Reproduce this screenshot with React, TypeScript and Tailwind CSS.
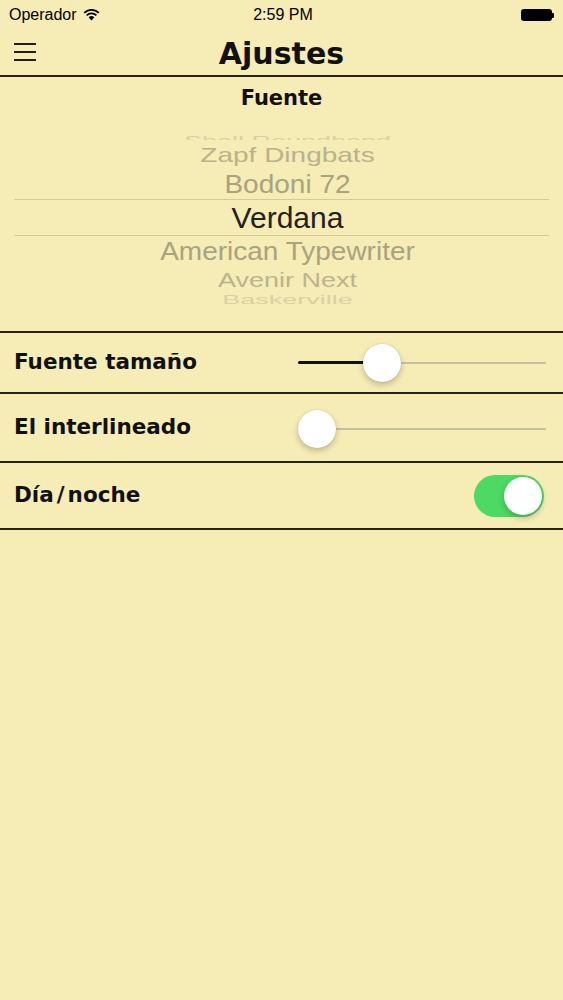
import React from 'react';

const verdana = { fontFamily: '"DejaVu Sans", Verdana, sans-serif' };

function StatusBar() {
  return (
    <div className="grid grid-cols-3 items-center h-[29px] px-[9px] pt-[1px] text-[16px] text-black font-['Liberation_Sans',sans-serif]">
      <div className="flex items-center gap-[6px]">
        <span>Operador</span>
        <svg width="17" height="12" viewBox="0 0 17 12">
          <path d="M8.5 11.5 L5.6 8.3 A4.2 4.2 0 0 1 11.4 8.3 Z" fill="black" />
          <path d="M3.6 6.3 A7 7 0 0 1 13.4 6.3" stroke="black" strokeWidth="1.8" fill="none" />
          <path d="M1.2 3.8 A10.5 10.5 0 0 1 15.8 3.8" stroke="black" strokeWidth="1.8" fill="none" />
        </svg>
      </div>
      <div className="text-center pl-[3px]">2:59 PM</div>
      <div className="flex justify-end items-center">
        <div className="w-[31px] h-[12px] rounded-[3px] bg-black" />
        <div className="w-[2px] h-[5px] rounded-r-[1px] bg-black" />
      </div>
    </div>
  );
}

function NavBar() {
  return (
    <div className="grid grid-cols-[1fr_auto_1fr] items-center h-[48px] border-b-2 border-[#26241a]">
      <div className="pl-[14px] flex flex-col gap-[6.5px] w-[36px] box-content">
        <div className="h-[1.5px] w-[22px] bg-[#1e1e1e]" />
        <div className="h-[1.5px] w-[22px] bg-[#1e1e1e]" />
        <div className="h-[1.5px] w-[22px] bg-[#1e1e1e]" />
      </div>
      <h1 className="text-[30px] font-bold text-[#111] leading-none pt-[3px]" style={verdana}>
        Ajustes
      </h1>
      <div />
    </div>
  );
}

const pickerFont = "font-['Liberation_Sans',Arial,sans-serif]";

function Picker() {
  return (
    <div className={`flex flex-col ${pickerFont} mx-[14px]`}>
      <div className="h-[13px] overflow-hidden flex items-end justify-center pl-[12px]">
        <span className="text-[27px] text-[#d8d0a6] leading-none scale-y-[0.5] origin-bottom translate-y-[7px] whitespace-nowrap">
          Shell Roundhand
        </span>
      </div>
      <div className="h-[30px] flex items-center justify-center pl-[12px]">
        <span className="text-[28px] text-[#b9b28b] leading-none scale-y-[0.75] whitespace-nowrap">Zapf Dingbats</span>
      </div>
      <div className="h-[29px] flex items-center justify-center pl-[12px]">
        <span className="text-[28px] text-[#a9a37f] leading-none scale-y-[0.93] whitespace-nowrap">Bodoni 72</span>
      </div>
      <div className="h-[37px] flex items-center justify-center border-y border-[#d3ca9a] pl-[12px]">
        <span className="text-[30px] text-[#23221a] leading-none whitespace-nowrap">Verdana</span>
      </div>
      <div className="h-[31px] flex items-center justify-center pl-[12px] pt-[1px]">
        <span className="text-[28px] text-[#a9a37f] leading-none scale-y-[0.92] whitespace-nowrap">American Typewriter</span>
      </div>
      <div className="h-[27px] flex items-center justify-center pl-[12px]">
        <span className="text-[27px] text-[#bbb48d] leading-none scale-y-[0.72] whitespace-nowrap">Avenir Next</span>
      </div>
      <div className="h-[11px] overflow-hidden flex items-start justify-center pl-[12px]">
        <span className="text-[27px] text-[#d8d0a6] leading-none scale-y-[0.5] origin-top -translate-y-[1px] whitespace-nowrap">
          Baskerville
        </span>
      </div>
    </div>
  );
}

function Slider({ thumbLeft, fill }: { thumbLeft: string; fill: string }) {
  return (
    <div className="relative w-[248px] h-[38px]">
      <div className="absolute left-0 right-0 top-[18px] h-[2px] bg-[#c5c0a4] rounded-full" />
      <div className={`absolute left-0 top-[17.5px] h-[3px] bg-[#111] rounded-full ${fill}`} />
      <div
        className={`absolute top-0 w-[38px] h-[38px] rounded-full bg-white shadow-[0_3px_6px_rgba(0,0,0,0.22),0_0_1px_rgba(0,0,0,0.2)] ${thumbLeft}`}
      />
    </div>
  );
}

function Toggle() {
  return (
    <div className="w-[70px] h-[42px] rounded-full bg-[#4cd964] p-[2px] flex justify-end">
      <div className="w-[38px] h-[38px] rounded-full bg-white shadow-[0_3px_6px_rgba(0,0,0,0.22)]" />
    </div>
  );
}

function Row({ label, height, children }: { label: React.ReactNode; height: string; children: React.ReactNode }) {
  return (
    <div className={`flex items-center justify-between pl-[14px] border-b-2 border-[#26241a] ${height}`}>
      <span className="text-[21.5px] font-bold text-[#111]" style={verdana}>
        {label}
      </span>
      {children}
    </div>
  );
}

export default function App() {
  return (
    <div className="min-h-screen w-full bg-[#f5ecb6]">
      <StatusBar />
      <NavBar />
      <div className="h-[41px] flex items-center justify-center pt-[2px]">
        <h2 className="text-[21px] font-bold text-[#111]" style={verdana}>
          Fuente
        </h2>
      </div>
      <div className="pt-[9px]">
        <Picker />
      </div>
      <div className="h-[28px] border-b-2 border-[#26241a]" />
      <Row label="Fuente tamaño" height="h-[61px]">
        <div className="pr-[17px]">
          <Slider thumbLeft="left-[65px]" fill="w-[84px]" />
        </div>
      </Row>
      <Row label="El interlineado" height="h-[69px]">
        <div className="pr-[17px] pt-[2px]">
          <Slider thumbLeft="left-0" fill="w-0" />
        </div>
      </Row>
      <Row
        label={
          <>
            Día<span className="px-[3px]">/</span>noche
          </>
        }
        height="h-[67px]"
      >
        <div className="pr-[19px] pt-[1px]">
          <Toggle />
        </div>
      </Row>
    </div>
  );
}
